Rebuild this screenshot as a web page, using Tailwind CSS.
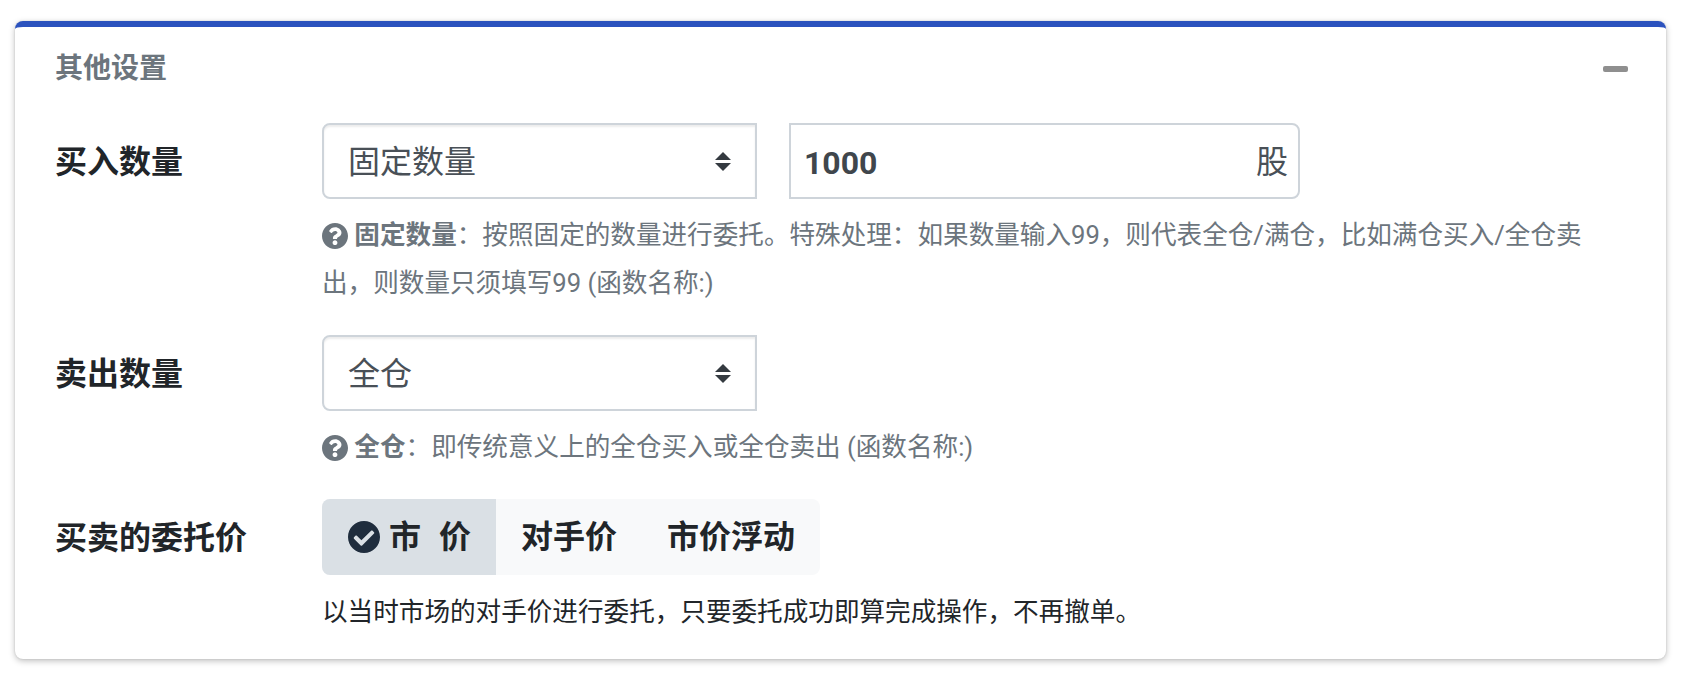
<!DOCTYPE html>
<html lang="zh-CN">

<head>
    <meta charset="UTF-8">
    <meta name="viewport" content="width=device-width, initial-scale=1.0">
    <title>其他设置</title>
    <script src="https://cdn.jsdelivr.net/npm/@tailwindcss/browser@4"></script>
</head>

<body class="bg-white min-h-screen font-['Roboto','Noto_Sans_CJK_SC',sans-serif] text-[#212529]">
    <div class="pt-[21px] pl-[15px] pr-[22px]">
        <div class="h-[638px] bg-white rounded-lg border-t-[6px] border-[#2b52be] shadow-[0_0_2px_rgba(0,0,0,0.125),0_2px_6px_rgba(0,0,0,0.25)] pl-[40px] pr-[38px]">
            <!-- header -->
            <div class="h-[80px] flex items-center justify-between">
                <h3 class="text-[28px] font-bold text-[#6c757d] leading-none pt-[4px]">其他设置</h3>
                <span class="block w-[25px] h-[6px] mt-[3px] rounded-[2px] bg-[#8f8f8f]"></span>
            </div>

            <!-- buy amount -->
            <div class="flex mt-[16px]">
                <label class="w-[267px] h-[76px] pt-[2px] flex items-center text-[32px] font-bold">买入数量</label>
                <div class="flex-1 mr-[24px]">
                    <div class="flex h-[76px]">
                        <div class="relative w-[435px]">
                            <select class="appearance-none w-full h-full pl-[24px] pt-[2px] bg-white text-[32px] text-[#495057] border-2 border-[#ced4da] rounded-l-lg shadow-[inset_0_2px_2px_rgba(0,0,0,0.075)]">
                                <option>固定数量</option>
                            </select>
                            <svg class="absolute left-[393px] top-[29px] w-[16px] h-[19px]" viewBox="0 0 16 19"><path d="M8 0l8 8H0zM8 19L0 11h16z" fill="#343a40" /></svg>
                        </div>
                        <div class="flex w-[511px] ml-[32px] border-2 border-[#ced4da] rounded-r-lg">
                            <input type="text" value="1000" class="min-w-0 flex-1 pl-[13px] pt-[4px] text-[32px] font-bold text-[#40464c] outline-none">
                            <span class="flex items-center pr-[10px] pt-[2px] text-[32px] text-[#495057]">股</span>
                        </div>
                    </div>
                    <p class="mt-[12px] text-[25.6px] leading-[48px] text-[#6c757d]">
                        <svg class="inline-block w-[26px] h-[26px] align-[-5px]" viewBox="8 8 496 496"><path fill="#6c757d" d="M504 256c0 137-111 248-248 248S8 393 8 256 119 8 256 8s248 111 248 248zM262.700 90c-54.500 0-89.300 23-116.500 63.800-3.500 5.300-2.400 12.400 2.700 16.300l34.700 26.300c5.200 3.900 12.600 3 16.700-2.100 17.900-22.700 30.100-35.800 57.300-35.800 20.400 0 45.700 13.100 45.700 32.900 0 15-12.400 22.700-32.500 34-23.500 13.200-54.600 29.600-54.600 70.600V302c0 6.600 5.400 12 12 12h56c6.600 0 12-5.400 12-12v-1.400c0-28.400 83-29.600 83-106.600 0-58-60.200-104-116.500-104zM256 338c-25.400 0-46 20.600-46 46 0 25.400 20.600 46 46 46s46-20.600 46-46c0-25.400-20.600-46-46-46z" /></svg>
                        <b class="font-bold">固定数量</b>：按照固定的数量进行委托。特殊处理：如果数量输入99，则代表全仓/满仓，比如满仓买入/全仓卖出，则数量只须填写99 (函数名称:)
                    </p>
                </div>
            </div>

            <!-- sell amount -->
            <div class="flex mt-[28px]">
                <label class="w-[267px] h-[76px] pt-[2px] flex items-center text-[32px] font-bold">卖出数量</label>
                <div class="flex-1 mr-[24px]">
                    <div class="relative w-[435px] h-[76px]">
                        <select class="appearance-none w-full h-full pl-[24px] pt-[2px] bg-white text-[32px] text-[#495057] border-2 border-[#ced4da] rounded-l-lg shadow-[inset_0_2px_2px_rgba(0,0,0,0.075)]">
                            <option>全仓</option>
                        </select>
                        <svg class="absolute left-[393px] top-[29px] w-[16px] h-[19px]" viewBox="0 0 16 19"><path d="M8 0l8 8H0zM8 19L0 11h16z" fill="#343a40" /></svg>
                    </div>
                    <p class="mt-[12px] text-[25.6px] leading-[48px] text-[#6c757d]">
                        <svg class="inline-block w-[26px] h-[26px] align-[-5px]" viewBox="8 8 496 496"><path fill="#6c757d" d="M504 256c0 137-111 248-248 248S8 393 8 256 119 8 256 8s248 111 248 248zM262.700 90c-54.500 0-89.300 23-116.500 63.800-3.500 5.300-2.400 12.400 2.700 16.300l34.700 26.300c5.200 3.900 12.600 3 16.700-2.100 17.900-22.700 30.100-35.800 57.300-35.800 20.400 0 45.700 13.100 45.700 32.900 0 15-12.400 22.700-32.500 34-23.500 13.200-54.600 29.600-54.600 70.600V302c0 6.600 5.400 12 12 12h56c6.600 0 12-5.400 12-12v-1.400c0-28.400 83-29.600 83-106.600 0-58-60.200-104-116.500-104zM256 338c-25.400 0-46 20.600-46 46 0 25.400 20.600 46 46 46s46-20.600 46-46c0-25.400-20.600-46-46-46z" /></svg>
                        <b class="font-bold">全仓</b>：即传统意义上的全仓买入或全仓卖出 (函数名称:)
                    </p>
                </div>
            </div>

            <!-- order price -->
            <div class="flex mt-[28px]">
                <label class="w-[267px] h-[76px] pt-[2px] flex items-center text-[32px] font-bold">买卖的委托价</label>
                <div>
                    <div class="inline-flex h-[76px] text-[32px] font-bold rounded-lg overflow-hidden bg-[#f8f9fa]">
                        <span class="flex items-center pl-[26px] pr-[25px] bg-[#dae0e5]">
                            <svg class="w-[32px] h-[32px] mr-[9px]" viewBox="8 8 496 496"><path fill="#1f2d3d" d="M504 256c0 137-111 248-248 248S8 393 8 256 119 8 256 8s248 111 248 248zM227.300 387.300l184-184c6.200-6.200 6.200-16.400 0-22.600l-22.600-22.600c-6.200-6.200-16.400-6.200-22.600 0L216 308.100l-70.100-70.100c-6.200-6.200-16.400-6.200-22.600 0l-22.600 22.600c-6.200 6.200-6.200 16.400 0 22.600l104 104c6.200 6.200 16.400 6.200 22.600 0z" /></svg>
                            <span>市</span><span class="ml-[18px]">价</span>
                        </span>
                        <span class="flex items-center px-[25px]">对手价</span>
                        <span class="flex items-center px-[25px]">市价浮动</span>
                    </div>
                    <p class="mt-[13px] text-[25.6px] leading-[48px]">以当时市场的对手价进行委托，只要委托成功即算完成操作，不再撤单。</p>
                </div>
            </div>
        </div>
    </div>
</body>

</html>
